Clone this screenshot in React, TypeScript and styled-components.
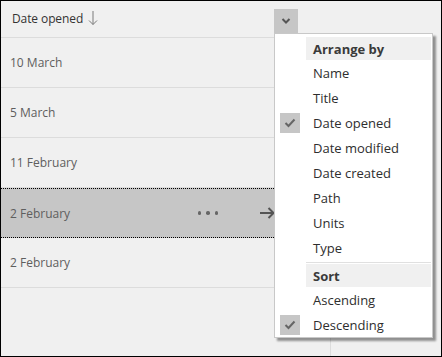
import React from 'react';
import styled, { createGlobalStyle } from 'styled-components';

const GlobalStyle = createGlobalStyle`
  html, body {
    margin: 0;
    padding: 0;
    background: #ffffff;
  }
  body {
    font-family: 'Open Sans', 'Noto Sans', 'Liberation Sans', sans-serif;
  }
`;

const Frame = styled.div`
  width: 442px;
  height: 357px;
  box-sizing: border-box;
  border: 1px solid #000000;
  background: #f0f0f0;
  display: flex;
  overflow: hidden;
`;

const ListColumn = styled.div`
  width: 330px;
  display: flex;
  flex-direction: column;
`;

const Header = styled.div`
  height: 37px;
  box-sizing: border-box;
  border-bottom: 1px solid #dcdcdc;
  display: flex;
  align-items: center;
  padding: 0 0 2px 11px;
  gap: 5px;
  font-size: 12px;
  color: #333333;
`;

const SortLabel = styled.span`
  letter-spacing: -0.1px;
`;

const HeaderSpacer = styled.div`
  flex: 1;
`;

const DropAnchor = styled.div`
  position: relative;
  margin-right: 33px;
  align-self: flex-start;
  margin-top: 8px;
`;

const DropButton = styled.div`
  width: 24px;
  height: 24px;
  background: #c6c6c6;
  display: flex;
  align-items: center;
  justify-content: center;
`;

const Rows = styled.div`
  flex: 1;
  border-right: 1px solid #dcdcdc;
`;

const Row = styled.div<{ $selected?: boolean }>`
  height: 50px;
  box-sizing: border-box;
  display: flex;
  align-items: center;
  padding: 0 0 0 9px;
  font-size: 12px;
  color: #5e5e5e;
  background: ${(p) => (p.$selected ? '#c6c6c6' : 'transparent')};
  border-top: ${(p) => (p.$selected ? '1px dotted #000000' : 'none')};
  border-bottom: ${(p) => (p.$selected ? '1px dotted #000000' : '1px solid #dcdcdc')};
`;

const RowLabel = styled.span`
  flex: 1;
`;

const RowActions = styled.div`
  display: flex;
  align-items: center;
  gap: 41px;
  margin-right: 55px;
`;

const Dots = styled.div`
  display: flex;
  gap: 5px;
  & > span {
    width: 3.5px;
    height: 3.5px;
    border-radius: 50%;
    background: #666666;
  }
`;

const SidePanel = styled.div`
  flex: 1;
`;

const Menu = styled.div`
  position: absolute;
  top: 24px;
  left: 0;
  width: 159px;
  height: 305px;
  box-sizing: border-box;
  background: #ffffff;
  border: 1px solid #c8c8c8;
  box-shadow: 3px 3px 2px rgba(0, 0, 0, 0.4);
  padding-top: 3px;
  font-size: 13px;
  color: #2e2e2e;
  z-index: 2;
`;

const GroupTitle = styled.div`
  height: 23px;
  margin: 0 1px 0 31px;
  padding-left: 7px;
  background: #f0f0f0;
  font-weight: 700;
  display: flex;
  align-items: center;
  color: #3a3a3a;
`;

const Separator = styled.div`
  height: 1px;
  margin: 2px 1px 1px 31px;
  background: #e0e0e0;
`;

const Item = styled.div`
  height: 25px;
  display: flex;
  align-items: center;
  gap: 13px;
  padding-left: 5px;
`;

const CheckSlot = styled.div<{ $on?: boolean }>`
  width: 20px;
  height: 20px;
  background: ${(p) => (p.$on ? '#c6c6c6' : 'transparent')};
  display: flex;
  align-items: center;
  justify-content: center;
`;

const Chevron = () => (
  <svg width="10" height="8" viewBox="0 0 10 8">
    <path d="M1.5 2 L5 5.5 L8.5 2" fill="none" stroke="#555" strokeWidth="2" />
  </svg>
);

const DownArrow = () => (
  <svg width="10" height="16" viewBox="0 0 10 16">
    <path d="M5 1 V14.5 M1 10.5 L5 14.5 L9 10.5" fill="none" stroke="#7a7a7a" strokeWidth="1" />
  </svg>
);

const RightArrow = () => (
  <svg width="16" height="14" viewBox="0 0 16 14">
    <path d="M1 7 H14.5 M9.5 2 L14.5 7 L9.5 12" fill="none" stroke="#555" strokeWidth="2" />
  </svg>
);

const Check = () => (
  <svg width="12" height="10" viewBox="0 0 12 10">
    <path d="M1.5 5 L4.5 8 L10.5 1.5" fill="none" stroke="#666" strokeWidth="2" />
  </svg>
);

const arrangeBy = ['Name', 'Title', 'Date opened', 'Date modified', 'Date created', 'Path', 'Units', 'Type'];
const sortBy = ['Ascending', 'Descending'];
const rows = ['10 March', '5 March', '11 February', '2 February', '2 February'];

const App: React.FC = () => {
  return (
    <>
      <GlobalStyle />
      <Frame>
        <ListColumn>
          <Header>
            <SortLabel>Date opened</SortLabel>
            <DownArrow />
            <HeaderSpacer />
            <DropAnchor>
              <DropButton>
                <Chevron />
              </DropButton>
              <Menu>
                <GroupTitle>Arrange by</GroupTitle>
                {arrangeBy.map((label) => (
                  <Item key={label}>
                    <CheckSlot $on={label === 'Date opened'}>
                      {label === 'Date opened' && <Check />}
                    </CheckSlot>
                    {label}
                  </Item>
                ))}
                <Separator />
                <GroupTitle>Sort</GroupTitle>
                {sortBy.map((label) => (
                  <Item key={label}>
                    <CheckSlot $on={label === 'Descending'}>
                      {label === 'Descending' && <Check />}
                    </CheckSlot>
                    {label}
                  </Item>
                ))}
              </Menu>
            </DropAnchor>
          </Header>
          <Rows>
            {rows.map((label, i) => (
              <Row key={i} $selected={i === 3}>
                <RowLabel>{label}</RowLabel>
                {i === 3 && (
                  <RowActions>
                    <Dots>
                      <span />
                      <span />
                      <span />
                    </Dots>
                    <RightArrow />
                  </RowActions>
                )}
              </Row>
            ))}
          </Rows>
        </ListColumn>
        <SidePanel />
      </Frame>
    </>
  );
};

export default App;
